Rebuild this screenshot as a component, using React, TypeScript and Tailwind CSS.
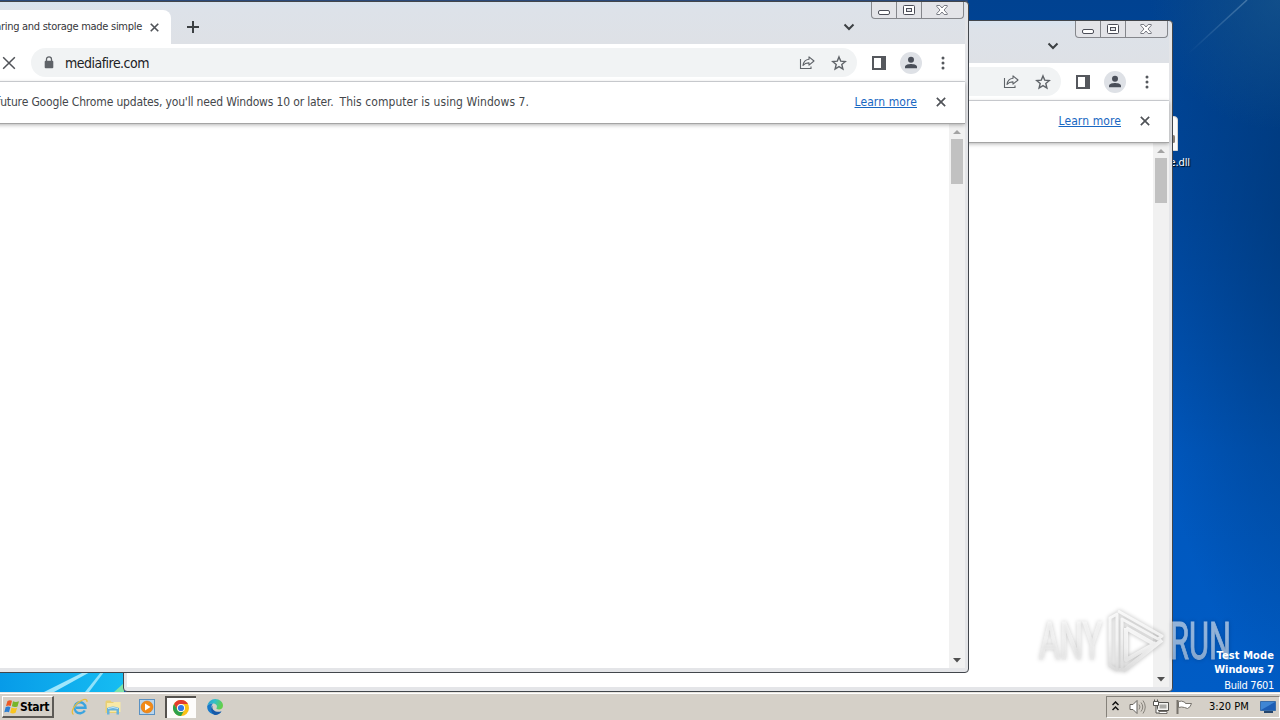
import type { ReactNode } from "react";
import clsx from "clsx";

type ChromeWindowProps = {
  className: string;
  title: string;
  url: string;
};

function IconBox({ children }: { children: ReactNode }) {
  return (
    <div className="flex h-8 w-8 shrink-0 items-center justify-center">
      {children}
    </div>
  );
}

function CloseIcon({ size, stroke }: { size: number; stroke: number }) {
  return (
    <svg width={size} height={size} viewBox="0 0 12 12" fill="none">
      <path
        d="M1 1l10 10M11 1L1 11"
        stroke="#505358"
        strokeWidth={stroke}
      />
    </svg>
  );
}

function ArrowIcon({ flip }: { flip?: boolean }) {
  return (
    <svg
      width="16"
      height="16"
      viewBox="0 0 16 16"
      className={clsx(flip && "rotate-180")}
    >
      <path
        d="M8 1L1 8l7 7M1 8h14"
        fill="none"
        stroke="#5f6368"
        strokeWidth="1.6"
      />
    </svg>
  );
}

function LockIcon() {
  return (
    <svg width="10" height="13" viewBox="0 0 10 13" fill="none">
      <rect x="0.7" y="4.8" width="8.6" height="7.4" rx="1" fill="#5f6368" />
      <path
        d="M2.5 5V3.3a2.5 2.5 0 0 1 5 0V5"
        stroke="#5f6368"
        strokeWidth="1.3"
      />
    </svg>
  );
}

function ShareIcon() {
  return (
    <svg width="16" height="16" viewBox="0 0 16 16" fill="none">
      <path d="M1.5 4v9.500h10.500v-2" stroke="#5f6368" strokeWidth="1.1" />
      <path
        d="M10 1.800L15 6l-5 4.200V7.900C7.200 7.800 5.400 8.700 4 10.500c.4-3.400 2.500-5.800 6-6.200z"
        stroke="#5f6368"
        strokeWidth="1.1"
        strokeLinejoin="round"
      />
    </svg>
  );
}

function StarIcon() {
  return (
    <svg width="16" height="16" viewBox="0 0 16 16" fill="none">
      <path
        d="M8 1.900l1.700 4.200 4.600.4-3.500 3 1.100 4.500L8 11.600l-3.900 2.400 1.100-4.500-3.500-3 4.600-.4z"
        stroke="#5f6368"
        strokeWidth="1.4"
      />
    </svg>
  );
}

function SidePanelIcon() {
  return (
    <svg width="14" height="14" viewBox="0 0 14 14">
      <path d="M0 0h14v14H0zM2 2v10h7V2z" fill="#55585d" fillRule="evenodd" />
    </svg>
  );
}

function AvatarIcon() {
  return (
    <svg width="22" height="22" viewBox="0 0 22 22">
      <circle cx="11" cy="11" r="11" fill="#dee1e6" />
      <circle cx="11" cy="7.800" r="3" fill="#4a4f59" />
      <path
        d="M5 16.200v-1.500C5 12.600 9 11.900 11 11.900s6 .7 6 2.800v1.500z"
        fill="#4a4f59"
      />
    </svg>
  );
}

function KebabIcon() {
  return (
    <svg width="4" height="14" viewBox="0 0 4 14" fill="#55585d">
      <circle cx="2" cy="2" r="1.5" />
      <circle cx="2" cy="7" r="1.5" />
      <circle cx="2" cy="12" r="1.5" />
    </svg>
  );
}

function CaptionButtons() {
  return (
    <div className="mr-px flex h-[17px] w-[93px] shrink-0 rounded-b-[4px] border border-t-0 border-[#85878c] bg-[#e3e4e8]">
      <div className="flex w-[25px] justify-center border-r border-[#85878c] pt-[8px]">
        <svg width="12" height="5" viewBox="0 0 12 5">
          <rect
            x="0.5"
            y="0.5"
            width="11"
            height="4"
            rx="1.5"
            fill="#fff"
            stroke="#4b4d57"
          />
        </svg>
      </div>
      <div className="flex w-[25px] justify-center border-r border-[#85878c] pt-[3px]">
        <svg width="12" height="10" viewBox="0 0 12 10">
          <rect
            x="0.5"
            y="0.5"
            width="11"
            height="9"
            rx="1"
            fill="#fff"
            stroke="#4b4d57"
          />
          <rect
            x="3.5"
            y="3.5"
            width="5"
            height="3"
            fill="#e3e4e8"
            stroke="#4b4d57"
          />
        </svg>
      </div>
      <div className="flex flex-1 justify-center pt-[3px] pr-px">
        <svg width="12" height="10" viewBox="0 0 12 10">
          <path
            d="M.8.5h3L6 3 8.200.5h3v1L8 5l3.200 3.500v1h-3L6 7 3.800 9.500h-3v-1L4 5 .8 1.500z"
            fill="#fff"
            stroke="#5b5d67"
            strokeWidth="0.8"
          />
        </svg>
      </div>
    </div>
  );
}

function Scrollbar() {
  return (
    <div className="flex w-4 flex-col items-center bg-[#f1f1f1] pt-[6px] pb-[5px]">
      <svg width="8" height="4" viewBox="0 0 8 4" className="mb-[5px]">
        <path d="M4 0l4 4H0z" fill="#a3a3a3" />
      </svg>
      <div className="h-[45px] w-[12px] bg-[#c1c1c1]" />
      <div className="flex-1" />
      <svg width="8" height="5" viewBox="0 0 8 5">
        <path d="M0 0h8L4 4.500z" fill="#505050" />
      </svg>
    </div>
  );
}

function ChromeWindow({ className, title, url }: ChromeWindowProps) {
  return (
    <div
      className={clsx(
        "absolute isolate flex h-[672px] w-[1050px] flex-col overflow-hidden rounded-[4px] border border-[#42464c] bg-[#e4e5e8] pr-[3px] pb-[4px] pl-[3px]",
        className,
      )}
    >
      <div className="-ml-[3px] flex h-[42px] shrink-0 bg-gradient-to-b from-[#d7e3f0] via-[#dde2e9] via-20% to-[#dee1e6]">
        <div className="mt-2 flex h-[34px] w-[251px] items-center justify-end rounded-t-[8px] bg-white pr-[12px]">
          <span className="mr-2 pt-px text-[11px] tracking-[-0.28px] whitespace-nowrap text-[#35363a]">
            {title}
          </span>
          <CloseIcon size={9} stroke={2.2} />
        </div>
        <svg
          width="12"
          height="12"
          viewBox="0 0 12 12"
          className="mt-[19px] ml-4"
        >
          <path d="M6 0v12M0 6h12" stroke="#3c4043" strokeWidth="2" />
        </svg>
        <div className="flex-1" />
        <svg
          width="12"
          height="8"
          viewBox="0 0 12 8"
          className="mt-[21px] mr-4"
          fill="none"
        >
          <path d="M1.500 1.500L6 6l4.500-4.500" stroke="#3c4043" strokeWidth="2" />
        </svg>
        <CaptionButtons />
      </div>

      <div className="flex h-[38px] shrink-0 items-center border-b border-[#d5d8dc] bg-white pr-[6px] pl-[6px]">
        <IconBox>
          <ArrowIcon />
        </IconBox>
        <IconBox>
          <ArrowIcon flip />
        </IconBox>
        <IconBox>
          <CloseIcon size={14} stroke={1.3} />
        </IconBox>
        <div className="mr-[6px] ml-[6px] flex h-[29px] flex-1 items-center rounded-full bg-[#f1f3f4] pr-[2px] pl-[13px]">
          <LockIcon />
          <span className="mt-px ml-[11px] text-[14px] tracking-[-0.52px] text-[#202124]">
            {url}
          </span>
          <div className="flex-1" />
          <IconBox>
            <ShareIcon />
          </IconBox>
          <IconBox>
            <StarIcon />
          </IconBox>
        </div>
        <IconBox>
          <SidePanelIcon />
        </IconBox>
        <IconBox>
          <AvatarIcon />
        </IconBox>
        <IconBox>
          <KebabIcon />
        </IconBox>
      </div>

      <div className="z-10 flex h-[42px] shrink-0 items-center border-b border-[#a4a4a4] bg-white pr-[19px] pb-[2px] text-[12px] shadow-[0_1px_4px_rgba(0,0,0,0.3)]">
        <div className="flex w-[606px] justify-end gap-[6px] whitespace-nowrap text-[#44474b]">
          <span className="tracking-[-0.16px]">
            To get future Google Chrome updates, you'll need Windows 10 or
            later.
          </span>
          <span className="tracking-[0.06px]">
            This computer is using Windows 7.
          </span>
        </div>
        <div className="flex-1" />
        <span className="mr-[19px] tracking-[0.1px] text-[#1967c2] underline">
          Learn more
        </span>
        <CloseIcon size={10} stroke={2} />
      </div>

      <div className="flex min-h-0 flex-1 bg-white">
        <div className="flex-1" />
        <Scrollbar />
      </div>
    </div>
  );
}

function Wallpaper() {
  return (
    <svg
      width="1280"
      height="692"
      viewBox="0 0 1280 692"
      className="absolute inset-0"
    >
      <defs>
        <linearGradient id="sky" x1="0" y1="0" x2="0" y2="1">
          <stop offset="0" stopColor="#004291" />
          <stop offset="0.3" stopColor="#00489f" />
          <stop offset="0.65" stopColor="#0057bd" />
          <stop offset="1" stopColor="#005cc5" />
        </linearGradient>
        <radialGradient
          id="shade"
          gradientUnits="userSpaceOnUse"
          cx="0"
          cy="0"
          r="1"
          gradientTransform="translate(1310 200) scale(170 500)"
        >
          <stop offset="0" stopColor="#003571" stopOpacity="0.75" />
          <stop offset="1" stopColor="#003571" stopOpacity="0" />
        </radialGradient>
        <radialGradient
          id="corner"
          gradientUnits="userSpaceOnUse"
          cx="1280"
          cy="0"
          r="130"
        >
          <stop offset="0" stopColor="#1c5a8e" stopOpacity="0.6" />
          <stop offset="1" stopColor="#1c5a8e" stopOpacity="0" />
        </radialGradient>
        <linearGradient id="ray" x1="1" y1="0" x2="0" y2="1">
          <stop offset="0" stopColor="#7ba4c8" stopOpacity="0.5" />
          <stop offset="1" stopColor="#7ba4c8" stopOpacity="0" />
        </linearGradient>
        <linearGradient id="glow" x1="0" y1="0" x2="1" y2="0">
          <stop offset="0" stopColor="#079be8" />
          <stop offset="1" stopColor="#16bdf2" />
        </linearGradient>
      </defs>
      <rect width="1280" height="692" fill="url(#sky)" />
      <rect x="960" width="320" height="692" fill="url(#shade)" />
      <rect x="1100" width="180" height="140" fill="url(#corner)" />
      <path d="M1247 0L1188 54" stroke="url(#ray)" strokeWidth="1.500" />
      <rect width="968" height="2" fill="#29497a" />
      <rect y="670" width="124" height="22" fill="url(#glow)" />
      <path d="M44 692L86 671h6L54 692z" fill="#b9f1ff" fillOpacity="0.85" />
      <path d="M85 692l16-20h3L89 692z" fill="#b9f1ff" fillOpacity="0.75" />
      <path d="M114 692l10-9v9z" fill="#7fe3a8" />
    </svg>
  );
}

function Watermark() {
  return (
    <svg
      width="200"
      height="72"
      viewBox="0 0 200 72"
      className="absolute top-[605px] left-[1034px] [filter:drop-shadow(0_0_2px_rgba(0,0,0,0.35))]"
      fontFamily="Roboto"
      fontWeight="400"
    >
      <defs>
        <linearGradient id="mark" x1="0" y1="0" x2="0" y2="1">
          <stop offset="0" stopColor="#ffffff" />
          <stop offset="0.45" stopColor="#fafafa" />
          <stop offset="1" stopColor="#dcdcdc" />
        </linearGradient>
      </defs>
      <g
        fill="url(#mark)"
        stroke="url(#mark)"
        strokeWidth="1"
        opacity="0.58"
        fontSize="51"
      >
        <text x="5" y="54" textLength="63" lengthAdjust="spacingAndGlyphs">
          ANY
        </text>
        <text x="136" y="54" textLength="61" lengthAdjust="spacingAndGlyphs">
          RUN
        </text>
      </g>
      <g
        fill="none"
        stroke="url(#mark)"
        opacity="0.8"
        strokeWidth="4"
        strokeLinejoin="round"
      >
        <path d="M83 9l-7 4v48l7 4V9z" strokeWidth="3" />
        <path d="M84 6l44 25-4 3-36-20v50l-3 1" strokeWidth="3" />
        <path d="M92 23v32l30-17M92 23l28 16M89 66l39-31" />
      </g>
    </svg>
  );
}

function WindowsFlag() {
  return (
    <svg width="16" height="15" viewBox="0 0 16 15">
      <path d="M3.500 2C5.300.8 6.800 1 8 1.800L6.700 7C5.300 6.200 3.800 6.200 2 7.100z" fill="#ee5a24" />
      <path d="M9 2.300c1.800 1 3.700 1 6 0l-1.500 5.200c-2 .9-3.800.8-5.600-.2z" fill="#78b52c" />
      <path d="M1.700 8.100c1.700-.9 3.200-.9 4.700 0L5 13.200C3.700 12.400 2 12.500.3 13.300z" fill="#2d7fd3" />
      <path d="M7.500 8.500c1.700 1 3.500 1 5.600.2l-1.500 5.100c-2 .9-3.700.8-5.400-.1z" fill="#f8c420" />
    </svg>
  );
}

function InternetExplorerIcon() {
  return (
    <svg width="18" height="18" viewBox="0 0 18 18" fill="none">
      <path
        d="M13.800 12.500A5.500 5.500 0 1 1 14.500 9.700H5"
        stroke="#3ba4df"
        strokeWidth="2.400"
      />
      <path
        d="M2.500 16.500C-1 14 4 5.500 10.500 2.500c4-2 6.200-1 5.300 1.500"
        stroke="#e9bd3c"
        strokeWidth="1.300"
      />
    </svg>
  );
}

function ExplorerIcon() {
  return (
    <svg width="18" height="18" viewBox="0 0 18 18">
      <path d="M1.500 3.500l1-1h4l1 1.500h8v11h-14z" fill="#e9cf72" />
      <path d="M3 5h6l1-1h6.500v10H3z" fill="#f8e9a6" />
      <path d="M3 10q6-3 12 0v6.500h-2.500v-4h-7v4H3z" fill="#67b2dc" />
      <path d="M4 10.500q5-2 10 0" stroke="#c7eaf9" fill="none" />
    </svg>
  );
}

function MediaPlayerIcon() {
  return (
    <svg width="16" height="16" viewBox="0 0 16 16">
      <rect x="0.5" y="0.500" width="15" height="15" fill="#b9d6ee" stroke="#5a91c2" />
      <circle cx="8" cy="8" r="6" fill="#f28a17" stroke="#d8700b" strokeWidth="0.5" />
      <path d="M6 4.500v7l5.500-3.500z" fill="#fff" />
    </svg>
  );
}

function ChromeIcon() {
  return (
    <svg width="16" height="16" viewBox="0 0 16 16">
      <circle cx="8" cy="8" r="8" fill="#fbc116" />
      <path d="M1.070 4A8 8 0 0 1 14.930 4H8a4 4 0 0 0-3.460 6z" fill="#e33b2e" />
      <path d="M1.070 4A8 8 0 0 0 8 16l3.460-6A4 4 0 0 1 4.540 10z" fill="#2da14c" />
      <circle cx="8" cy="8" r="4" fill="#fff" />
      <circle cx="8" cy="8" r="3.100" fill="#3478e5" />
    </svg>
  );
}

function EdgeIcon() {
  return (
    <svg width="16" height="16" viewBox="0 0 16 16">
      <defs>
        <linearGradient id="edgeTop" x1="0" y1="0" x2="1" y2="0.3">
          <stop offset="0" stopColor="#2599d5" />
          <stop offset="0.5" stopColor="#32bfc9" />
          <stop offset="1" stopColor="#63cf4c" />
        </linearGradient>
      </defs>
      <path d="M.3 7C1 3 4.300 0 8.200 0 12.700 0 16 3.100 16 6.600 16 9 14.300 10.600 12 10.600c-2 0-3-.8-2.500-1.500C11 6.500 8.600 4.500 5.700 4.500 3 4.500 1 5.700.3 7z" fill="url(#edgeTop)" />
      <path d="M.2 7C1.300 5.200 3.400 4.300 6 4.500 4.400 6 4 8.200 5 10.300c1.300 2.900 5 4.200 9.500 2.200A8 8 0 0 1 .2 7z" fill="#1979c9" />
      <path d="M5.800 6.600c-1.700 3 1.400 7.600 8.700 5.900A8 8 0 0 1 7.800 16C4.200 14.800 2.800 9 5.800 6.600z" fill="#1759a8" />
    </svg>
  );
}

function TrayIcons() {
  return (
    <>
      <svg width="7" height="10" viewBox="0 0 7 10" fill="none" className="mb-[2px]">
        <path
          d="M.5 4L3.500 1l3 3M.5 9l3-3 3 3"
          stroke="#111"
          strokeWidth="1.500"
        />
      </svg>
      <svg width="17" height="16" viewBox="0 0 17 16" fill="none" className="ml-[10px]">
        <path
          d="M1 5.500h3L8 1.500v13l-4-4H1z"
          fill="#fff"
          stroke="#66635e"
        />
        <path
          d="M10 5.500q2 2.500 0 5M12 3.500q3.500 4.500 0 9M14 1.500q4.500 6.500 0 13"
          stroke="#85817a"
        />
      </svg>
      <svg width="16" height="16" viewBox="0 0 16 16" className="ml-[7px]">
        <path d="M4.500 3.500h11v8h-11z" fill="#f4f3f0" stroke="#55534f" />
        <path d="M6.500 5.500h7v4h-7z" fill="#aaa9a5" />
        <path d="M6 12.500h8v2H6z" fill="#fff" stroke="#55534f" strokeWidth="0.8" />
        <path
          d="M1.500.5v2M4.500.5v2M.5 2.500h5v4h-5zM3 6.500v7.500h3"
          fill="#fff"
          stroke="#55534f"
        />
      </svg>
      <svg width="17" height="16" viewBox="0 0 17 16" fill="none" className="ml-[7px]">
        <path d="M1.500 1v14" stroke="#77736c" strokeWidth="2" />
        <path
          d="M2.500 2.500q3-1 6 .5l1 1.500h6q-1 4-4 5l-3-1q-3-1-6 0z"
          fill="#fff"
          stroke="#77736c"
        />
      </svg>
    </>
  );
}

function Taskbar() {
  return (
    <div className="relative flex h-[28px] items-center border-t border-[#e8e5df] bg-[#d5d0c8] pt-px pl-[2px] shadow-[inset_0_1px_0_#ffffff]">
      <div className="flex h-[22px] w-[52px] items-center border-t border-r-2 border-b-2 border-l border-t-white border-r-[#5d5a56] border-b-[#5d5a56] border-l-white pl-px">
        <WindowsFlag />
        <span className="pt-px text-[12px] font-bold tracking-[-0.35px] text-black">
          Start
        </span>
      </div>
      <div className="ml-[17px] flex items-center gap-[16px]">
        <InternetExplorerIcon />
        <div className="-mr-px -ml-px w-[19px]">
          <ExplorerIcon />
        </div>
        <div className="ml-px">
          <MediaPlayerIcon />
        </div>
      </div>
      <div className="ml-[10px] flex h-[22px] w-[31px] items-center justify-center border-t-2 border-l-2 border-t-[#55524e] border-l-[#55524e] bg-[#fdfcfb] pr-[2px] pb-px">
        <ChromeIcon />
      </div>
      <div className="ml-[11px]">
        <EdgeIcon />
      </div>
      <div className="flex-1" />
      <div className="flex h-[22px] w-[174px] items-center border border-t-[#85817a] border-r-white border-b-white border-l-[#85817a] pl-[5px]">
        <TrayIcons />
        <span className="ml-[16px] w-[42px] pt-px text-[11px] tracking-[-0.02px] whitespace-nowrap text-black">
          3:20 PM
        </span>
        <svg width="16" height="14" viewBox="0 0 16 14" className="ml-[9px]">
          <path d="M0.500 1.500h15v9h-15z" fill="#1d5eb5" stroke="#396da9" />
          <path d="M1 10V2h14z" fill="#3f86d4" />
          <path d="M4 11h9v2H4z" fill="#26466d" />
        </svg>
      </div>
    </div>
  );
}

export default function App() {
  return (
    <div className="flex h-[720px] w-[1280px] flex-col overflow-hidden font-['DejaVu_Sans_Condensed','DejaVu_Sans',sans-serif]">
      <div className="relative h-[692px]">
        <Wallpaper />

        <div className="absolute top-[116px] left-[1145px] flex w-[45px] flex-col items-end">
          <div className="mr-[12px] flex h-[35px] w-[32px] items-center justify-end rounded-tr-[4px] border border-[#d5d5d5] bg-[#fafafa]">
            <span className="mt-[10px] mr-[2px] h-2 w-[3px] rounded-full bg-[#8a8178]" />
          </div>
          <span className="mt-[5px] text-[11px] leading-[14px] tracking-[-0.1px] text-white [text-shadow:1px_1px_1px_#000]">
            file.dll
          </span>
        </div>

        <ChromeWindow
          className="top-[20px] left-[123px]"
          title="File sharing and storage made simple"
          url="mediafire.com"
        />
        <ChromeWindow
          className="top-px left-[-81px]"
          title="File sharing and storage made simple"
          url="mediafire.com"
        />

        <Watermark />

        <div className="absolute right-[6px] bottom-[-1px] flex flex-col items-end text-[11px] leading-[14px] text-white">
          <span className="font-bold tracking-[0.1px]">Test Mode</span>
          <span className="font-bold tracking-[-0.1px]">Windows 7</span>
          <span className="mt-[2px] tracking-[-0.35px]">Build 7601</span>
        </div>
      </div>
      <Taskbar />
    </div>
  );
}
